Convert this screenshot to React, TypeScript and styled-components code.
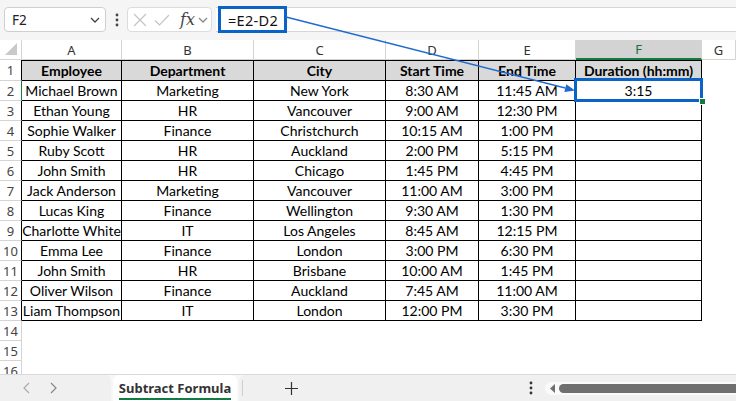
import React from 'react';
import styled, { createGlobalStyle } from 'styled-components';

const GlobalStyle = createGlobalStyle`
    html, body {
        margin: 0;
        padding: 0;
        overflow: hidden;
        background: #ffffff;
    }
`;

const UI_FONT = `"Noto Sans", "Open Sans", sans-serif`;
const CELL_FONT = `Lato, "Noto Sans", sans-serif`;
const BLUE = '#0b63c8';
const GREEN = '#107c41';

const COLS = '22px 100px 132px 132px 93px 97px 126px 1fr';

interface IEmployeeRow {
    name: string;
    dept: string;
    city: string;
    start: string;
    end: string;
    duration: string;
}

const rows: IEmployeeRow[] = [
    { name: 'Michael Brown', dept: 'Marketing', city: 'New York', start: '8:30 AM', end: '11:45 AM', duration: '3:15' },
    { name: 'Ethan Young', dept: 'HR', city: 'Vancouver', start: '9:00 AM', end: '12:30 PM', duration: '' },
    { name: 'Sophie Walker', dept: 'Finance', city: 'Christchurch', start: '10:15 AM', end: '1:00 PM', duration: '' },
    { name: 'Ruby Scott', dept: 'HR', city: 'Auckland', start: '2:00 PM', end: '5:15 PM', duration: '' },
    { name: 'John Smith', dept: 'HR', city: 'Chicago', start: '1:45 PM', end: '4:45 PM', duration: '' },
    { name: 'Jack Anderson', dept: 'Marketing', city: 'Vancouver', start: '11:00 AM', end: '3:00 PM', duration: '' },
    { name: 'Lucas King', dept: 'Finance', city: 'Wellington', start: '9:30 AM', end: '1:30 PM', duration: '' },
    { name: 'Charlotte White', dept: 'IT', city: 'Los Angeles', start: '8:45 AM', end: '12:15 PM', duration: '' },
    { name: 'Emma Lee', dept: 'Finance', city: 'London', start: '3:00 PM', end: '6:30 PM', duration: '' },
    { name: 'John Smith', dept: 'HR', city: 'Brisbane', start: '10:00 AM', end: '1:45 PM', duration: '' },
    { name: 'Oliver Wilson', dept: 'Finance', city: 'Auckland', start: '7:45 AM', end: '11:00 AM', duration: '' },
    { name: 'Liam Thompson', dept: 'IT', city: 'London', start: '12:00 PM', end: '3:30 PM', duration: '' },
];

const Page = styled.div`
    position: relative;
    width: 736px;
    height: 401px;
    display: flex;
    flex-direction: column;
    overflow: hidden;
    background: #ffffff;
`;

const TopBar = styled.div`
    height: 40px;
    flex: none;
    display: flex;
    align-items: flex-start;
    padding-top: 7px;
    box-sizing: border-box;
    background: #f5f5f5;
`;

const NameBox = styled.div`
    width: 102px;
    height: 25px;
    margin-left: 4px;
    box-sizing: border-box;
    background: #ffffff;
    border: 1px solid #cfcfcf;
    border-radius: 4px;
    display: flex;
    align-items: center;
    justify-content: space-between;
    padding: 0 5px 0 7px;
    font-family: ${UI_FONT};
    font-size: 13.5px;
    color: #222;
`;

const Dots = styled.div`
    width: 21px;
    height: 25px;
    display: flex;
    align-items: center;
    justify-content: center;
`;

const FxBox = styled.div`
    width: 85px;
    height: 25px;
    box-sizing: border-box;
    background: #ffffff;
    border: 1px solid #dcdcdc;
    border-radius: 4px;
    display: flex;
    align-items: center;
    padding-left: 5px;
    gap: 7px;
`;

const FxLabel = styled.span`
    font-family: "DejaVu Serif", "Liberation Serif", serif;
    font-style: italic;
    font-size: 16px;
    color: #444;
    margin-left: 3px;
    margin-right: -4px;
`;

const FormulaInput = styled.div`
    flex: 1;
    height: 25px;
    margin-left: 4px;
    box-sizing: border-box;
    background: #ffffff;
    border-top: 1px solid #d6d6d6;
    border-bottom: 1px solid #d6d6d6;
    display: flex;
    align-items: center;
    padding-left: 12px;
    font-family: ${UI_FONT};
    font-size: 14.5px;
    letter-spacing: 0.3px;
    color: #111;
`;

const Sheet = styled.div`
    flex: 1;
    overflow: hidden;
    background: #ffffff;
`;

const Row = styled.div<{ $h: number }>`
    display: grid;
    grid-template-columns: ${COLS};
    height: ${p => p.$h}px;
`;

const Corner = styled.div`
    position: relative;
    border-right: 1px solid #d4d4d4;
    border-bottom: 1px solid #d4d4d4;
    background: #ffffff;
`;

const CornerMark = styled.svg`
    position: absolute;
    right: 3px;
    bottom: 3px;
`;

const ColHead = styled.div<{ $active?: boolean }>`
    box-sizing: border-box;
    display: flex;
    align-items: center;
    justify-content: center;
    font-family: ${UI_FONT};
    font-size: 13px;
    color: ${p => (p.$active ? '#1d6b40' : '#333')};
    background: ${p => (p.$active ? '#d3d3d3' : '#ffffff')};
    border-right: 1px solid #d4d4d4;
    border-bottom: ${p => (p.$active ? `2px solid ${GREEN}` : '1px solid #d4d4d4')};
`;

const RowHead = styled.div<{ $edge: string }>`
    box-sizing: border-box;
    display: flex;
    align-items: center;
    justify-content: center;
    font-family: ${UI_FONT};
    font-size: 13px;
    color: #444;
    border-right: 1px solid ${p => p.$edge};
    border-bottom: 1px solid #d4d4d4;
`;

const Cell = styled.div<{ $head?: boolean; $top?: boolean }>`
    box-sizing: border-box;
    display: flex;
    align-items: center;
    justify-content: center;
    white-space: nowrap;
    overflow: hidden;
    font-family: ${CELL_FONT};
    font-size: 14px;
    font-weight: ${p => (p.$head ? 700 : 400)};
    color: #000;
    background: ${p => (p.$head ? '#d9d9d9' : '#ffffff')};
    border-right: 1px solid #000;
    border-bottom: 1px solid #000;
    border-top: ${p => (p.$top ? '1px solid #000' : 'none')};
`;

const Blank = styled.div``;

const TabBar = styled.div`
    height: 27px;
    flex: none;
    display: flex;
    align-items: stretch;
    background: #f7f7f7;
    border-top: 1px solid #d9d9d9;
    box-sizing: border-box;
`;

const NavPanel = styled.div`
    width: 111px;
    display: flex;
    align-items: center;
    padding-left: 22px;
    gap: 20px;
    box-sizing: border-box;
    background: #f0f0f0;
    border-top-right-radius: 6px;
`;

const ActiveTab = styled.div`
    width: 124px;
    margin-left: 2px;
    display: flex;
    flex-direction: column;
    align-items: center;
    justify-content: center;
    background: #ffffff;
    border-top-left-radius: 6px;
    border-top-right-radius: 6px;
`;

const TabLabel = styled.span`
    font-family: ${UI_FONT};
    font-weight: 700;
    font-size: 13px;
    color: #333;
    padding: 3px 0 2px;
    border-bottom: 2px solid ${GREEN};
    line-height: 16px;
`;

const AddPanel = styled.div`
    flex: 1;
    margin-left: 2px;
    display: flex;
    align-items: center;
    background: #f0f0f0;
    border-top-left-radius: 6px;
`;

const TabDivider = styled.div`
    width: 1px;
    height: 16px;
    background: #cfcfcf;
    margin-left: 3px;
`;

const AddButton = styled.div`
    margin-left: 42px;
    display: flex;
    align-items: center;
`;

const ScrollArea = styled.div`
    margin-left: auto;
    display: flex;
    align-items: center;
    gap: 12px;
`;

const ScrollTrack = styled.div`
    width: 191px;
    height: 13px;
    border-radius: 7px 0 0 7px;
    background: #fafafa;
    display: flex;
    align-items: center;
    padding-left: 5px;
    gap: 3px;
    box-sizing: border-box;
`;

const ScrollThumb = styled.div`
    flex: 1;
    height: 9px;
    border-radius: 5px 0 0 5px;
    background: #6f6f6f;
`;

const Overlay = styled.svg`
    position: absolute;
    left: 0;
    top: 0;
    pointer-events: none;
`;

const SelectBox = styled.div<{ $x: number; $y: number; $w: number; $h: number }>`
    position: absolute;
    left: ${p => p.$x}px;
    top: ${p => p.$y}px;
    width: ${p => p.$w}px;
    height: ${p => p.$h}px;
    box-sizing: border-box;
    border: 3px solid ${BLUE};
    pointer-events: none;
`;

const FillHandle = styled.div`
    position: absolute;
    left: 699px;
    top: 98px;
    width: 5px;
    height: 5px;
    background: ${GREEN};
    border: 1px solid #fff;
`;

const Chevron = ({ color = '#444' }: { color?: string }) => (
    <svg width="10" height="6" viewBox="0 0 10 6">
        <path d="M1 1 L5 5 L9 1" fill="none" stroke={color} strokeWidth="1.3" />
    </svg>
);

const VDots = ({ color = '#444' }: { color?: string }) => (
    <svg width="4" height="14" viewBox="0 0 4 14">
        <circle cx="2" cy="2" r="1.4" fill={color} />
        <circle cx="2" cy="7" r="1.4" fill={color} />
        <circle cx="2" cy="12" r="1.4" fill={color} />
    </svg>
);

const letters = ['A', 'B', 'C', 'D', 'E', 'F', 'G'];

export default function App() {
    return (
        <>
            <GlobalStyle />
            <Page>
                <TopBar>
                    <NameBox>
                        <span>F2</span>
                        <Chevron />
                    </NameBox>
                    <Dots><VDots /></Dots>
                    <FxBox>
                        <svg width="14" height="14" viewBox="0 0 14 14">
                            <path d="M1 1 L13 13 M13 1 L1 13" stroke="#c4c4c4" strokeWidth="1.2" fill="none" />
                        </svg>
                        <svg width="16" height="14" viewBox="0 0 16 14">
                            <path d="M1 7.5 L5.5 12 L15 2" stroke="#c4c4c4" strokeWidth="1.2" fill="none" />
                        </svg>
                        <FxLabel>fx</FxLabel>
                        <Chevron color="#888" />
                    </FxBox>
                    <FormulaInput>=E2-D2</FormulaInput>
                </TopBar>

                <Sheet>
                    <Row $h={20}>
                        <Corner>
                            <CornerMark width="14" height="14" viewBox="0 0 14 14">
                                <polygon points="13,1 13,13 1,13" fill="#c9c9c9" />
                            </CornerMark>
                        </Corner>
                        {letters.map(l => (
                            <ColHead key={l} $active={l === 'F'}>{l}</ColHead>
                        ))}
                    </Row>

                    <Row $h={21}>
                        <RowHead $edge="#000">1</RowHead>
                        <Cell $head $top>Employee</Cell>
                        <Cell $head $top>Department</Cell>
                        <Cell $head $top>City</Cell>
                        <Cell $head $top>Start Time</Cell>
                        <Cell $head $top>End Time</Cell>
                        <Cell $head $top>Duration (hh:mm)</Cell>
                        <Blank />
                    </Row>

                    {rows.map((r, i) => (
                        <Row $h={20} key={i}>
                            <RowHead $edge={i === 0 ? GREEN : '#000'}>{i + 2}</RowHead>
                            <Cell>{r.name}</Cell>
                            <Cell>{r.dept}</Cell>
                            <Cell>{r.city}</Cell>
                            <Cell>{r.start}</Cell>
                            <Cell>{r.end}</Cell>
                            <Cell>{r.duration}</Cell>
                            <Blank />
                        </Row>
                    ))}

                    {[14, 15, 16].map(n => (
                        <Row $h={20} key={n}>
                            <RowHead $edge="#d4d4d4">{n}</RowHead>
                        </Row>
                    ))}
                </Sheet>

                <TabBar>
                    <NavPanel>
                        <svg width="8" height="12" viewBox="0 0 8 12">
                            <path d="M7 1 L2 6 L7 11" stroke="#aaa" strokeWidth="1.2" fill="none" />
                        </svg>
                        <svg width="8" height="12" viewBox="0 0 8 12">
                            <path d="M1 1 L6 6 L1 11" stroke="#888" strokeWidth="1.2" fill="none" />
                        </svg>
                    </NavPanel>
                    <ActiveTab>
                        <TabLabel>Subtract Formula</TabLabel>
                    </ActiveTab>
                    <AddPanel>
                        <TabDivider />
                        <AddButton>
                            <svg width="13" height="13" viewBox="0 0 13 13">
                                <path d="M6.5 0 V13 M0 6.5 H13" stroke="#333" strokeWidth="1.2" />
                            </svg>
                        </AddButton>
                        <ScrollArea>
                            <VDots color="#333" />
                            <ScrollTrack>
                                <svg width="6" height="9" viewBox="0 0 6 9">
                                    <polygon points="5,0 5,9 0,4.5" fill="#6f6f6f" />
                                </svg>
                                <ScrollThumb />
                            </ScrollTrack>
                        </ScrollArea>
                    </AddPanel>
                </TabBar>

                <SelectBox $x={218} $y={6} $w={69} $h={27} />
                <SelectBox $x={574} $y={78} $w={129} $h={24} />
                <FillHandle />

                <Overlay width="736" height="401" viewBox="0 0 736 401">
                    <line x1="286" y1="17" x2="565.3" y2="88" stroke="#1f6ad0" strokeWidth="1.4" />
                    <polygon points="575,90.5 564.3,91.9 566.3,84.2" fill="#1f6ad0" />
                </Overlay>
            </Page>
        </>
    );
}
